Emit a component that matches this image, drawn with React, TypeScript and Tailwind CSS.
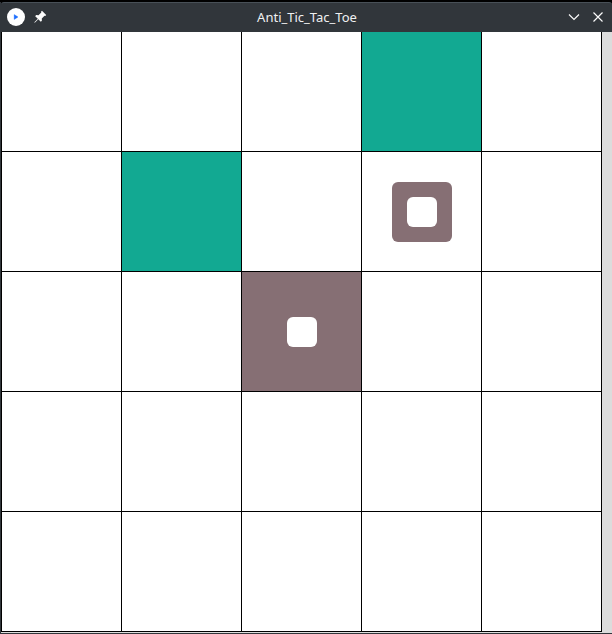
const teal = "bg-[#12a992]";
const mauve = "bg-[#866f74]";

function Hole() {
  return <div className="size-[30px] rounded-[6px] bg-white" />;
}

function Cell({ index }: { index: number }) {
  const filled = index === 3 || index === 6 ? teal : index === 12 ? mauve : "bg-white";
  return (
    <div className={`flex items-center justify-center border-r border-b border-black pt-px pl-px ${filled}`}>
      {index === 8 && (
        <div className="flex size-[60px] items-center justify-center rounded-[6px] bg-[#866f74]">
          <Hole />
        </div>
      )}
      {index === 12 && <Hole />}
    </div>
  );
}

function TitleBar() {
  return (
    <header className="grid h-[30px] shrink-0 grid-cols-[1fr_auto_1fr] items-center rounded-t-[3px] border-t border-[#485057] bg-[#31363b] pr-[7px] pb-px pl-[6px]">
      <div className="flex items-center gap-[8px]">
        <svg width="18" height="18" viewBox="0 0 18 18">
          <circle cx="9" cy="9" r="9" fill="#fff" />
          <path d="M7.2 6.6 11 9 7.2 11.4Z" fill="#1a6dff" stroke="#1a6dff" strokeWidth=".4" />
        </svg>
        <svg width="14" height="14" viewBox="0 0 14 14" fill="#fcfcfc">
          <path d="M9 .8 13.2 5 12.3 6 11.5 5.7 8.8 8.4 8.9 10.8 7.8 11.7 5.3 9.2 1.8 12.7 1.3 12.2 4.8 8.7 2.2 6.2 3.1 5.1 5.5 5.2 8.3 2.5 8 1.8Z" />
        </svg>
      </div>
      <h1 className="pl-[2px] font-['Noto_Sans',sans-serif] text-[13px] leading-[18px] whitespace-nowrap text-[#eff0f1]">
        Anti_Tic_Tac_Toe
      </h1>
      <div className="flex items-center justify-end gap-[10px]">
        <svg width="14" height="14" viewBox="0 0 14 14" fill="none" stroke="#fcfcfc" strokeWidth="1.15">
          <path d="M2 4.5 7 9.5 12 4.5" />
        </svg>
        <svg width="14" height="14" viewBox="0 0 14 14" fill="none" stroke="#fcfcfc" strokeWidth="1.15">
          <path d="M2.5 2.5 11.5 11.5M11.5 2.5 2.5 11.5" />
        </svg>
      </div>
    </header>
  );
}

export default function App() {
  return (
    <div className="flex h-[634px] w-[612px] flex-col overflow-hidden bg-black pt-[2px]">
      <div className="flex flex-1 flex-col border-b border-l border-[#31363b]">
        <TitleBar />
        <main className="flex h-[601px] bg-[#dcdcdc]">
          <div className="grid h-[600px] w-[601px] grid-cols-[repeat(5,120px)] grid-rows-[repeat(5,120px)] border-l border-black">
            {Array.from({ length: 25 }, (_, i) => (
              <Cell key={i} index={i} />
            ))}
          </div>
        </main>
      </div>
    </div>
  );
}
